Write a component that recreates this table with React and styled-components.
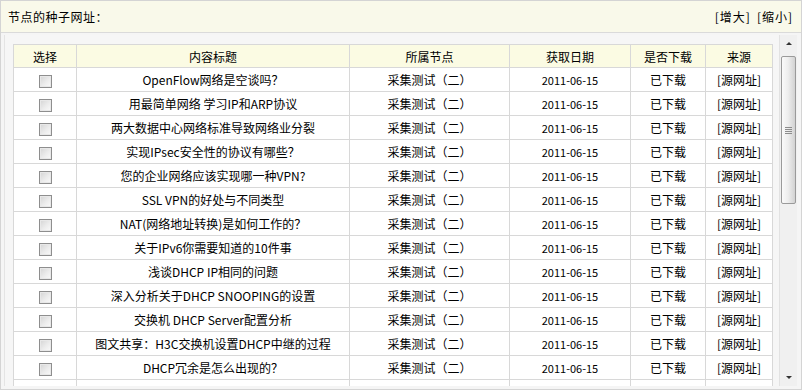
import React from 'react';
import styled, { createGlobalStyle } from 'styled-components';

const GlobalStyle = createGlobalStyle`
  html, body { margin: 0; padding: 0; background: #fff; }
  body { font-family: "Noto Sans CJK SC", "DejaVu Sans", sans-serif; font-size: 12px; color: #000; }
`;

const Panel = styled.div`
  width: 800px;
  height: 388px;
  border: 1px solid #d4d4d4;
  display: flex;
  flex-direction: column;
  background: #f5f5f5;
`;

const TopBar = styled.div`
  height: 31px;
  flex: none;
  display: flex;
  align-items: center;
  justify-content: space-between;
  padding: 0 8px 0 7px;
  background: #f9f9ea;
  border-bottom: 1px solid #dadada;
`;

const Title = styled.span`
  letter-spacing: 0.5px;
`;

const Tools = styled.div`
  display: flex;
  gap: 6px;
  letter-spacing: 1px;
`;

const ToolLink = styled.a`
  color: #000;
  text-decoration: none;
  cursor: pointer;
`;

const Body = styled.div`
  flex: 1;
  display: flex;
  padding: 2px 4px 3px 3px;
  min-height: 0;
`;

const Viewport = styled.div`
  flex: 1;
  overflow: hidden;
  padding: 9px 8px 0 8px;
  border-left: 1px solid #e4e4e4;
  background: #f6f6f6;
`;

const Table = styled.table`
  width: 759px;
  border-collapse: collapse;
  table-layout: fixed;
  background: #fff;
  border: 1px solid #d8d8d8;
`;

const Th = styled.th`
  height: 22px;
  padding: 0;
  font-weight: normal;
  font-size: 12px;
  background: #fbfbe3;
  border: 1px solid #d8d8d8;
  text-align: center;
`;

const Td = styled.td`
  height: 23px;
  padding: 0;
  border: 1px solid #d8d8d8;
  text-align: center;
  white-space: nowrap;
  overflow: hidden;
  font-size: ${({ $small }) => ($small ? '11px' : '12px')};
`;

const Check = styled.span`
  display: inline-block;
  vertical-align: middle;
  width: 11px;
  height: 11px;
  border: 1px solid #8e8e8e;
  background: linear-gradient(135deg, #d4d4d4 0%, #ececec 55%, #fafafa 100%);
  box-shadow: inset 0 0 0 1px #e8e8e8;
`;

const Scrollbar = styled.div`
  width: 17px;
  flex: none;
  display: flex;
  flex-direction: column;
  background: #f0f0f0;
  border-left: 1px solid #e2e2e2;
`;

const Arrow = styled.div`
  height: 17px;
  flex: none;
  display: flex;
  align-items: center;
  justify-content: center;
`;

const Tri = styled.span`
  width: 0;
  height: 0;
  border-left: 3px solid transparent;
  border-right: 3px solid transparent;
  ${({ $down }) =>
    $down ? 'border-top: 3px solid #333;' : 'border-bottom: 3px solid #333;'}
`;

const Track = styled.div`
  flex: 1;
  padding: 4px 1px 0 1px;
`;

const Thumb = styled.div`
  height: 146px;
  border: 1px solid #9a9a9a;
  border-radius: 2px;
  background: linear-gradient(90deg, #fafafa 0%, #eeeeee 45%, #d2d2d2 100%);
  display: flex;
  flex-direction: column;
  align-items: center;
  justify-content: center;
  gap: 1px;
`;

const Grip = styled.span`
  width: 7px;
  height: 1px;
  background: #8c8c8c;
`;

const rows = [
  'OpenFlow网络是空谈吗？',
  '用最简单网络 学习IP和ARP协议',
  '两大数据中心网络标准导致网络业分裂',
  '实现IPsec安全性的协议有哪些？',
  '您的企业网络应该实现哪一种VPN?',
  'SSL VPN的好处与不同类型',
  'NAT(网络地址转换)是如何工作的？',
  '关于IPv6你需要知道的10件事',
  '浅谈DHCP IP相同的问题',
  '深入分析关于DHCP SNOOPING的设置',
  '交换机 DHCP Server配置分析',
  '图文共享：H3C交换机设置DHCP中继的过程',
  'DHCP冗余是怎么出现的？',
  '三层交换机DHCP配置',
];

const cols = [63, 273, 160, 121, 75, 67];

export default function App() {
  return (
    <>
      <GlobalStyle />
      <Panel>
        <TopBar>
          <Title>节点的种子网址：</Title>
          <Tools>
            <ToolLink>[增大]</ToolLink>
            <ToolLink>[缩小]</ToolLink>
          </Tools>
        </TopBar>
        <Body>
          <Viewport>
            <Table>
              <colgroup>
                {cols.map((w, i) => (
                  <col key={i} style={{ width: w }} />
                ))}
              </colgroup>
              <thead>
                <tr>
                  <Th>选择</Th>
                  <Th>内容标题</Th>
                  <Th>所属节点</Th>
                  <Th>获取日期</Th>
                  <Th>是否下载</Th>
                  <Th>来源</Th>
                </tr>
              </thead>
              <tbody>
                {rows.map((t) => (
                  <tr key={t}>
                    <Td><Check /></Td>
                    <Td>{t}</Td>
                    <Td>采集测试（二）</Td>
                    <Td $small>2011-06-15</Td>
                    <Td>已下载</Td>
                    <Td>[源网址]</Td>
                  </tr>
                ))}
              </tbody>
            </Table>
          </Viewport>
          <Scrollbar>
            <Arrow><Tri /></Arrow>
            <Track>
              <Thumb>
                <Grip />
                <Grip />
                <Grip />
                <Grip />
              </Thumb>
            </Track>
            <Arrow><Tri $down /></Arrow>
          </Scrollbar>
        </Body>
      </Panel>
    </>
  );
}
